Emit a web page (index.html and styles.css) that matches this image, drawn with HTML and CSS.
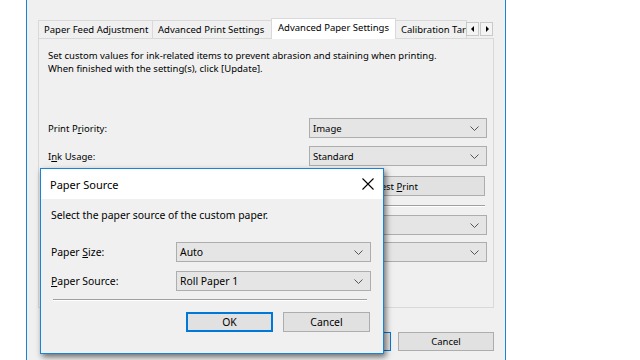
FILE: index.html
```html
<!DOCTYPE html>
<html>
<head>
<meta charset="utf-8">
<link rel="stylesheet" href="styles.css">
</head>
<body>
<div class="window">
  <div class="tabstrip">
    <div class="tab t1">Paper Feed Adjustment</div>
    <div class="tab t2">Advanced Print Settings</div>
    <div class="tab t3 active">Advanced Paper Settings</div>
    <div class="tab t4">Calibration Target</div>
    <div class="arrows">
      <span class="arrow"><svg width="4" height="6" viewBox="0 0 4 6"><path d="M3 0 L0 3 L3 6 Z" fill="#000"/></svg></span>
      <span class="arrow"><svg width="4" height="6" viewBox="0 0 4 6"><path d="M1 0 L4 3 L1 6 Z" fill="#000"/></svg></span>
    </div>
  </div>
  <div class="panel">
    <p class="intro">Set custom values for ink-related items to prevent abrasion and staining when printing.<br>When finished with the setting(s), click [Update].</p>
    <div class="row r1">
      <span class="label">Print P<u>r</u>iority:</span>
      <div class="select"><span>Image</span><svg class="chev" width="9" height="5" viewBox="0 0 9 5"><path d="M0.5 0.5 L4.5 4.5 L8.5 0.5" fill="none" stroke="#555" stroke-width="1"/></svg></div>
    </div>
    <div class="row r2">
      <span class="label">I<u>n</u>k Usage:</span>
      <div class="select"><span>Standard</span><svg class="chev" width="9" height="5" viewBox="0 0 9 5"><path d="M0.5 0.5 L4.5 4.5 L8.5 0.5" fill="none" stroke="#555" stroke-width="1"/></svg></div>
    </div>
    <div class="row r3">
      <span class="label"></span>
      <div class="btn wide"><span>Test <u>P</u>rint</span></div>
    </div>
    <div class="row r4">
      <span class="label"></span>
      <div class="hr"></div>
    </div>
    <div class="row r5">
      <span class="label"></span>
      <div class="select"><span></span><svg class="chev" width="9" height="5" viewBox="0 0 9 5"><path d="M0.5 0.5 L4.5 4.5 L8.5 0.5" fill="none" stroke="#555" stroke-width="1"/></svg></div>
    </div>
    <div class="row r6">
      <span class="label"></span>
      <div class="select"><span></span><svg class="chev" width="9" height="5" viewBox="0 0 9 5"><path d="M0.5 0.5 L4.5 4.5 L8.5 0.5" fill="none" stroke="#555" stroke-width="1"/></svg></div>
    </div>
  </div>
  <div class="footer">
    <div class="btn main default"><span>OK</span></div>
    <div class="btn main"><span>Cancel</span></div>
  </div>

  <div class="dialog">
    <div class="titlebar">
      <span class="title">Paper Source</span>
      <svg class="close" width="12" height="12" viewBox="0 0 12 12"><path d="M0.5 0.5 L11.5 11.5 M11.5 0.5 L0.5 11.5" stroke="#000" stroke-width="1.1"/></svg>
    </div>
    <div class="dbody">
      <p class="dtext">Select the paper source of the custom paper.</p>
      <div class="drow d1">
        <span class="dlabel">Paper <u>S</u>ize:</span>
        <div class="select dsel"><span>Auto</span><svg class="chev" width="9" height="5" viewBox="0 0 9 5"><path d="M0.5 0.5 L4.5 4.5 L8.5 0.5" fill="none" stroke="#555" stroke-width="1"/></svg></div>
      </div>
      <div class="drow d2">
        <span class="dlabel"><u>P</u>aper Source:</span>
        <div class="select dsel"><span>Roll Paper 1</span><svg class="chev" width="9" height="5" viewBox="0 0 9 5"><path d="M0.5 0.5 L4.5 4.5 L8.5 0.5" fill="none" stroke="#555" stroke-width="1"/></svg></div>
      </div>
      <div class="dsep"></div>
      <div class="dbuttons">
        <div class="btn dbtn default2"><span>OK</span></div>
        <div class="btn dbtn"><span>Cancel</span></div>
      </div>
    </div>
  </div>
</div>
</body>
</html>
```
FILE: styles.css
```css
* { box-sizing: border-box; }
html, body { margin: 0; padding: 0; }
body {
  width: 640px;
  height: 360px;
  overflow: hidden;
  background: #fff;
  font-family: "Noto Sans", "Open Sans", sans-serif;
  font-size: 9.5px;
  color: #000;
}
u { text-decoration-thickness: 1px; text-underline-offset: 1px; }
.window {
  position: relative;
  margin-left: 26px;
  width: 480px;
  height: 360px;
  background: #f0f0f0;
  border-left: 1px solid #1883d7;
  border-right: 1px solid #1883d7;
  padding: 18px 11px 0 11px;
}
.tabstrip {
  display: flex;
  align-items: flex-end;
  height: 21px;
  margin-bottom: -1px;
  position: relative;
  z-index: 1;
}
.tab {
  flex-shrink: 0;
  height: 18px;
  border: 1px solid #d9d9d9;
  border-bottom: none;
  background: #f0f0f0;
  white-space: nowrap;
  overflow: hidden;
  padding: 0 0 0 5px;
  line-height: 17px;
  margin-bottom: 1px;
}
.t1 { width: 115px; }
.t2 { width: 121px; margin-left: -1px; }
.t3 { width: 125px; margin-left: -2px; }
.t4 { width: 72px; margin-left: -1px; padding-left: 5px; }
.tab.active {
  height: 21px;
  background: #fff;
  margin-bottom: 0;
  line-height: 18px;
  padding-left: 6px;
  position: relative;
  z-index: 2;
}
.arrows {
  display: flex;
  align-self: flex-start;
  margin-top: 4px;
  margin-left: -1px;
}
.arrow {
  width: 13px;
  height: 14px;
  border: 1px solid #c9c9c9;
  background: #f4f4f4;
  display: flex;
  align-items: center;
  justify-content: center;
}
.arrow + .arrow { margin-left: 1px; }
.panel {
  height: 270px;
  border: 1px solid #d9d9d9;
  background: #f0f0f0;
  padding: 10px 5px 10px 9px;
}
.intro {
  margin: 0;
  line-height: 13px;
}
.row {
  display: flex;
  align-items: center;
  height: 20px;
}
.label { width: 261px; flex-shrink: 0; }
.r1 { margin-top: 43px; }
.r2 { margin-top: 8px; }
.r3 { margin-top: 10px; }
.r4 { margin-top: 0; height: 19px; }
.r5 { margin-top: 0; }
.r6 { margin-top: 7px; }
.select {
  flex-shrink: 0;
  position: relative;
  width: 178px;
  height: 20px;
  border: 1px solid #adadad;
  background: #e5e5e5;
  padding-left: 3px;
  display: flex;
  align-items: center;
  justify-content: space-between;
  padding-right: 7px;
}
.chev { display: block; }
.btn {
  flex-shrink: 0;
  height: 20px;
  border: 1px solid #adadad;
  background: #e1e1e1;
  display: flex;
  align-items: center;
  justify-content: center;
  white-space: nowrap;
}
.wide { width: 176px; }
.hr {
  width: 176px;
  height: 2px;
  border-top: 1px solid #a0a0a0;
  border-bottom: 1px solid #fff;
}
.footer {
  display: flex;
  justify-content: flex-end;
  gap: 7px;
  margin-top: 24px;
}
.btn.main { width: 96px; height: 19px; }
.btn.default { border: 1px solid #0078d7; }

.dialog {
  position: absolute;
  left: 13px;
  top: 168px;
  width: 344px;
  height: 186px;
  border: 1px solid #1883d7;
  background: #f0f0f0;
  box-shadow: 2px 3px 6px rgba(0,0,0,0.55);
  z-index: 5;
  display: flex;
  flex-direction: column;
  font-size: 10.4px;
}
.titlebar {
  height: 30px;
  background: #fff;
  display: flex;
  align-items: center;
  justify-content: space-between;
  padding: 0 9px 0 9px;
}
.title { font-size: 11px; }
.close { display: block; }
.dbody {
  padding: 9px 13px 0 10px;
  flex: 1;
}
.dtext { margin: 0; line-height: 15px; }
.drow {
  display: flex;
  align-items: center;
  height: 20px;
}
.d1 { margin-top: 19px; }
.d2 { margin-top: 9px; }
.dlabel { width: 125px; flex-shrink: 0; }
.dsel { width: 195px; }
.dsep {
  margin: 8px 3px 0 2px;
  height: 2px;
  border-top: 1px solid #a0a0a0;
  border-bottom: 1px solid #fff;
}
.dbuttons {
  display: flex;
  justify-content: flex-end;
  gap: 10px;
  margin-top: 11px;
}
.dbtn { width: 87px; }
.btn.default2 { border: 2px solid #0078d7; }
```
